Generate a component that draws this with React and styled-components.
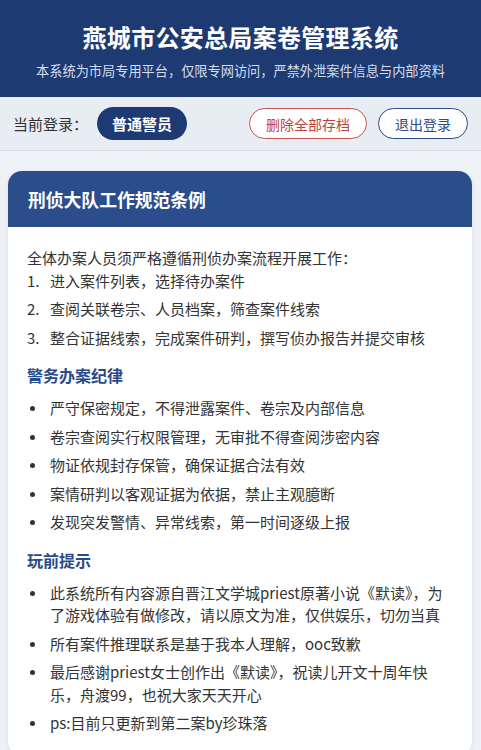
import styled, { createGlobalStyle } from "styled-components";

const GlobalStyle = createGlobalStyle`
  * { box-sizing: border-box; }
  body {
    margin: 0;
    background: #eef1f5;
    font-family: "Noto Sans CJK SC", "Noto Sans", "Liberation Sans", sans-serif;
    color: #333;
  }
`;

const steps = [
  "进入案件列表，选择待办案件",
  "查阅关联卷宗、人员档案，筛查案件线索",
  "整合证据线索，完成案件研判，撰写侦办报告并提交审核",
];

const rules = [
  "严守保密规定，不得泄露案件、卷宗及内部信息",
  "卷宗查阅实行权限管理，无审批不得查阅涉密内容",
  "物证依规封存保管，确保证据合法有效",
  "案情研判以客观证据为依据，禁止主观臆断",
  "发现突发警情、异常线索，第一时间逐级上报",
];

const tips = [
  "此系统所有内容源自晋江文学城priest原著小说《默读》，为了游戏体验有做修改，请以原文为准，仅供娱乐，切勿当真",
  "所有案件推理联系是基于我本人理解，ooc致歉",
  "最后感谢priest女士创作出《默读》，祝读儿开文十周年快乐，舟渡99，也祝大家天天开心",
  "ps:目前只更新到第二案by珍珠落",
];

function App() {
  return (
    <Page>
      <GlobalStyle />
      <Header>
        <Title>燕城市公安总局案卷管理系统</Title>
        <Subtitle>本系统为市局专用平台，仅限专网访问，严禁外泄案件信息与内部资料</Subtitle>
      </Header>

      <LoginBar>
        <LoginLabel>当前登录：</LoginLabel>
        <RoleBadge>普通警员</RoleBadge>
        <Actions>
          <OutlineButton $tone="danger">删除全部存档</OutlineButton>
          <OutlineButton>退出登录</OutlineButton>
        </Actions>
      </LoginBar>

      <Main>
        <Card>
          <CardHeader>刑侦大队工作规范条例</CardHeader>
          <CardBody>
            <Intro>全体办案人员须严格遵循刑侦办案流程开展工作：</Intro>
            <List>
              {steps.map((s, i) => (
                <Item key={s}>
                  <Num>{i + 1}.</Num>
                  <span>{s}</span>
                </Item>
              ))}
            </List>

            <SectionTitle>警务办案纪律</SectionTitle>
            <List>
              {rules.map((r) => (
                <Bullet key={r}>{r}</Bullet>
              ))}
            </List>

            <SectionTitle>玩前提示</SectionTitle>
            <List>
              {tips.map((t) => (
                <Bullet key={t}>{t}</Bullet>
              ))}
            </List>
          </CardBody>
        </Card>
      </Main>
    </Page>
  );
}

export default App;

const Page = styled.div`
  min-height: 100vh;
  background: #eef1f5;
`;

const Header = styled.header`
  background: #1d3a73;
  color: #fff;
  text-align: center;
  padding: 21px 12px 16px;
`;

const Title = styled.h1`
  margin: 0;
  font-size: 24px;
  line-height: 32px;
  font-weight: 700;
  letter-spacing: 0.3px;
`;

const Subtitle = styled.p`
  margin: 8px 0 0;
  font-size: 13.2px;
  line-height: 20px;
  color: #d5ddec;
`;

const LoginBar = styled.div`
  height: 54px;
  display: flex;
  align-items: center;
  padding: 0 13px;
  background: #e8ecf3;
  border-bottom: 1px solid #d6dbe4;
`;

const LoginLabel = styled.span`
  font-size: 15px;
  color: #333;
  margin-right: 9px;
`;

const RoleBadge = styled.span`
  height: 33px;
  padding: 0 15px;
  display: inline-flex;
  align-items: center;
  border-radius: 17px;
  background: #1d3a73;
  color: #fff;
  font-size: 15px;
  font-weight: 700;
`;

const Actions = styled.div`
  margin-left: auto;
  display: flex;
  gap: 11px;
`;

const OutlineButton = styled.button`
  height: 31px;
  padding: 0 16px;
  border-radius: 16px;
  background: #fff;
  font-family: inherit;
  font-size: 14px;
  cursor: pointer;
  border: 1.5px solid ${(p) => (p.$tone === "danger" ? "#c8524f" : "#2d4b86")};
  color: ${(p) => (p.$tone === "danger" ? "#c0403c" : "#2d4b86")};
`;

const Main = styled.main`
  padding: 20px 9px 0 8px;
`;

const Card = styled.section`
  background: #fff;
  border-radius: 14px;
  overflow: hidden;
  box-shadow: 0 1px 4px rgba(30, 50, 90, 0.08);
`;

const CardHeader = styled.h2`
  margin: 0;
  height: 56px;
  display: flex;
  align-items: center;
  padding: 0 20px;
  background: #2c4d8c;
  color: #fff;
  font-size: 17.8px;
  font-weight: 700;
`;

const CardBody = styled.div`
  padding: 20px 19px 14px;
  font-size: 15px;
  line-height: 22.5px;
  color: #333;
`;

const Intro = styled.p`
  margin: 0;
`;

const List = styled.ul`
  list-style: none;
  margin: 0;
  padding: 0;
`;

const Item = styled.li`
  display: flex;
  margin-bottom: 6px;
`;

const Num = styled.span`
  flex: 0 0 23px;
`;

const Bullet = styled.li`
  display: flex;
  margin-bottom: 6px;

  &::before {
    content: "";
    flex: 0 0 5px;
    height: 5px;
    margin: 9px 15px 0 3px;
    border-radius: 50%;
    background: #333;
  }
`;

const SectionTitle = styled.h3`
  margin: 14px 0 10px;
  font-size: 16px;
  line-height: 24px;
  font-weight: 700;
  color: #2a4a8a;
`;
